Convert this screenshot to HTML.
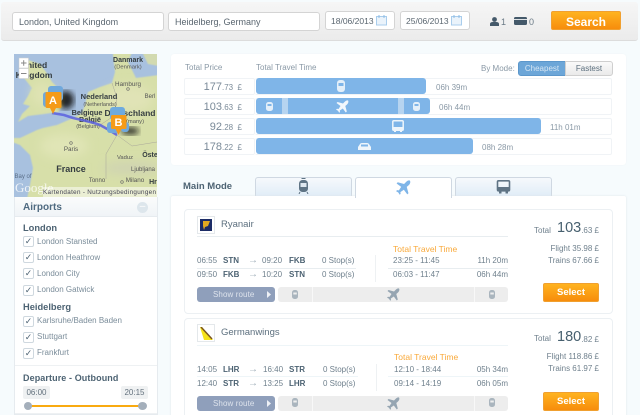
<!DOCTYPE html>
<html><head><meta charset="utf-8">
<style>
html,body{margin:0;padding:0;width:640px;height:415px;overflow:hidden;}
body{background:#f6fbfd;position:relative;font-family:"Liberation Sans",sans-serif;color:#5c6f7e;font-size:9px;}
div,span,svg{position:absolute;box-sizing:border-box;white-space:nowrap;}
.inp{background:#fff;border:1px solid #d4d4d4;border-radius:3px;height:19px;line-height:18px;font-size:9px;color:#5a6670;padding-left:6px;}
.org{background:linear-gradient(#ffb320,#f78d0c);border:1px solid #f0a030;border-radius:2px;color:#fff;font-weight:bold;text-align:center;}
.pb{left:184px;width:71px;background:#fff;border:1px solid #f0f3f6;border-radius:2px;height:17px;}
.rb{left:255px;width:357px;height:17px;background:#fff;border:1px solid #f0f3f6;border-left:0;border-radius:2px;}
.bar{left:256px;height:16px;background:#7fb5e8;border-radius:3px;}
.pr{left:184px;width:58px;text-align:right;color:#7a8a98;font-size:11px;line-height:16px;}
.pr small{font-size:8px;}
.tt{color:#8a99a6;font-size:8px;line-height:12px;}
.cb{left:23px;width:11px;height:11px;background:#fff;border:1px solid #cfd8df;border-radius:2px;color:#4d6373;font-size:9px;line-height:9px;text-align:center;}
.cl{left:37px;font-size:8px;color:#7b8d9a;line-height:12px;}
.h{left:23px;font-weight:bold;font-size:9.3px;color:#4d6373;line-height:12px;}
.card{left:184px;width:429px;background:#fff;border:1px solid #ecf0f3;border-radius:4px;}
.t{font-size:8px;color:#6f808d;line-height:12px;}
.a{font-size:10px;color:#a0aeb9;line-height:12px;left:248px;}
.b{font-size:8px;color:#4d6373;font-weight:bold;line-height:12px;}
.tab{top:177px;height:20px;border:1px solid #cfd8e2;border-bottom:0;border-radius:3px 3px 0 0;background:linear-gradient(#f6f9fc,#dfecf7);}
.sr{left:197px;width:78px;height:15px;background:#8f9fbb;border-radius:3px;color:#dde3ec;font-size:8px;letter-spacing:.1px;line-height:15px;padding-left:16px;}
.sb{left:278px;width:230px;height:15px;background:#ededed;border-radius:3px;}
.r{text-align:right;}
</style></head><body>

<div style="left:1px;top:2px;width:637px;height:39px;background:linear-gradient(#f6f6f6,#ebebeb);border-bottom:1px solid #dcdcdc;border-radius:3px"></div>
<div class="inp" style="left:12px;top:12px;width:152px">London, United Kingdom</div>
<div class="inp" style="left:168px;top:12px;width:152px">Heidelberg, Germany</div>
<div class="inp" style="left:325px;top:11px;width:70px;font-size:8.5px;padding-left:5px">18/06/2013</div>
<svg style="left:376px;top:15px" width="12" height="11"><rect x=".5" y="1.5" width="10" height="8.5" fill="#eaf3fb" stroke="#a9cdec"/><rect x="2.5" y="0" width="1" height="3" fill="#8dbce6"/><rect x="7.5" y="0" width="1" height="3" fill="#8dbce6"/></svg>
<div class="inp" style="left:400px;top:11px;width:70px;font-size:8.5px;padding-left:5px">25/06/2013</div>
<svg style="left:451px;top:15px" width="12" height="11"><rect x=".5" y="1.5" width="10" height="8.5" fill="#eaf3fb" stroke="#a9cdec"/><rect x="2.5" y="0" width="1" height="3" fill="#8dbce6"/><rect x="7.5" y="0" width="1" height="3" fill="#8dbce6"/></svg>
<svg style="left:490px;top:17px" width="9" height="9"><circle cx="4.5" cy="2.5" r="2.4" fill="#44596a"/><path d="M0 9V7q0-2 3-2h3q3 0 3 2v2z" fill="#44596a"/></svg>
<div style="left:501px;top:16px;font-size:9px;color:#6a7a86;line-height:12px">1</div>
<svg style="left:514px;top:17px" width="13" height="9"><rect width="13" height="8" rx="1.5" fill="#44596a"/><rect y="2" width="13" height="1" fill="#dfe3e6"/></svg>
<div style="left:529px;top:16px;font-size:9px;color:#6a7a86;line-height:12px">0</div>
<div class="org" style="left:551px;top:11px;width:70px;height:19px;font-size:12px;line-height:20px">Search</div>

<!-- left column -->
<div style="left:14px;top:197px;width:144px;height:218px;background:#fff;border:1px solid #e6ebef;border-top:0"></div>
<svg style="left:14px;top:54px" width="143" height="143" viewBox="0 0 143 143">
<defs><filter id="bl"><feGaussianBlur stdDeviation="3"/></filter><filter id="s"><feGaussianBlur stdDeviation="0.6"/></filter><filter id="m"><feGaussianBlur stdDeviation="5"/></filter></defs>
<rect width="143" height="143" fill="#a8c1df"/>
<g filter="url(#s)">
<path d="M-2 84L6 84 23 76 29 74 43 71 59 64 68 59 71 51 74 38 86 33 98 29 101 18 99 1 99 -2H118L114 8 118 16 122 24 145 21V145H13L16 131 19 114 16 101 6 91-2 88z" fill="#d7dfa9"/>
<path d="M14 6L26 10 32 18 38 28 46 36 52 44 50 52 44 58 30 60 14 62 4 68 8 60 16 52 9 50 14 42 18 34 10 24z" fill="#d7dfa9"/>
<path d="M128 -2H145V12L134 10z" fill="#d2dab0"/>
</g>
<g filter="url(#m)">
<ellipse cx="118" cy="114" rx="30" ry="6" fill="#cfd3b2"/>
<ellipse cx="50" cy="92" rx="24" ry="12" fill="#e0e5b6"/>
<ellipse cx="115" cy="45" rx="24" ry="14" fill="#e0e3b6"/>
<ellipse cx="28" cy="40" rx="10" ry="12" fill="#dfe3b4"/>
</g>
<path d="M68 60L86 71 103 81M86 71L100 62 103 44 98 29M103 81L118 92 143 88M103 81L92 100 92 125" fill="none" stroke="#a9a79a" stroke-width=".5"/>
<g font-family="Liberation Sans" text-anchor="middle" fill="#343c40">
<text x="23" y="14" font-size="8.500" font-weight="bold">nited</text>
<text x="20" y="24" font-size="8.500" font-weight="bold">Kingdom</text>
<text x="114" y="8" font-size="7" font-weight="bold">Danmark</text>
<text x="114" y="14.500" font-size="5.800" fill="#555">(Denmark)</text>
<text x="114" y="32" font-size="6.300" fill="#555">Hamburg</text>
<text x="136" y="44" font-size="6" fill="#555">Berl</text>
<text x="85" y="45" font-size="7.500" font-weight="bold">Nederland</text>
<text x="86" y="52" font-size="5.500" fill="#555">(Netherlands)</text>
<text x="73" y="61" font-size="7.300" font-weight="bold">Belgique</text>
<text x="76" y="68" font-size="7.300" font-weight="bold">België</text>
<text x="74" y="74" font-size="5.500" fill="#555">(Belgium)</text>
<text x="116" y="62" font-size="8.500" font-weight="bold">Deutschland</text>
<text x="121" y="69" font-size="5.800" fill="#555">(many)</text>
<text x="57" y="97" font-size="6.300" fill="#555">Paris</text>
<text x="57" y="118" font-size="9" font-weight="bold">France</text>
<text x="111" y="105" font-size="5.800" fill="#555">Vaduz</text>
<text x="136" y="103" font-size="7" font-weight="bold">Öste</text>
<text x="129" y="117" font-size="6" fill="#555">Ljubljana</text>
<text x="83" y="128" font-size="6" fill="#555">Tonno</text>
<text x="121" y="128" font-size="6.300" fill="#555">Milano</text>
<text x="139" y="130" font-size="7" font-weight="bold">Hr</text>
<text x="9" y="124" font-size="6" fill="#5b6f88">Bay of</text>
</g>
<circle cx="114" cy="35" r="1.300" fill="none" stroke="#666" stroke-width=".6"/>
<circle cx="57" cy="89" r="1.300" fill="none" stroke="#666" stroke-width=".6"/>
<circle cx="108" cy="128" r="1.300" fill="none" stroke="#666" stroke-width=".6"/>
<path d="M38 59L50 61 59 64 68 66 80 69 86 71 95 76 103 81" fill="none" stroke="#5a60e0" stroke-width="2.600" opacity=".85"/>
<ellipse cx="52" cy="46" rx="8" ry="9" fill="#111" opacity=".85" filter="url(#bl)"/>
<ellipse cx="116" cy="77" rx="9" ry="4" fill="#111" opacity=".75" filter="url(#bl)"/>
<rect x="34" y="32" width="15" height="15" rx="3" fill="#6fa8dc"/>
<rect x="29" y="38" width="15" height="15" rx="3" fill="#6fa8dc"/>
<rect x="96" y="53" width="15" height="13" rx="3" fill="#6eaadf"/>
<rect x="93" y="68" width="14" height="11" rx="3" fill="#6fa8dc"/>
<rect x="107" y="68" width="8" height="10" rx="3" fill="#6fa8dc"/>
<path d="M32 38h14a1.500 1.500 0 0 1 1.500 1.500v13a1.500 1.500 0 0 1-1.500 1.500h-4l-3 6-3-6h-3a1.500 1.500 0 0 1-1.500-1.500v-13a1.500 1.500 0 0 1 1.500-1.500z" fill="#f59b18"/>
<path d="M98 61h13a1.500 1.500 0 0 1 1.500 1.500v11a1.500 1.500 0 0 1-1.500 1.500h-3.500l-3 6-3-6h-3a1.500 1.500 0 0 1-1.500-1.500v-11a1.500 1.500 0 0 1 1.500-1.500z" fill="#f59b18"/>
<text x="39" y="50" font-size="11" font-weight="bold" fill="#fff" text-anchor="middle" font-family="Liberation Sans">A</text>
<text x="104.500" y="72" font-size="11" font-weight="bold" fill="#fff" text-anchor="middle" font-family="Liberation Sans">B</text>
<rect x="29" y="133" width="114" height="10" fill="#fff" opacity=".5"/>
<text x="1" y="138" font-size="13" fill="#fff" opacity=".8" font-family="Liberation Serif">Google</text>
<text x="29" y="140" font-size="6.300" fill="#445" font-family="Liberation Sans" textLength="113">Kartendaten - Nutzungsbedingungen</text>
<rect x="5" y="4" width="9.500" height="10" fill="#fff" stroke="#ccc" stroke-width=".5"/>
<rect x="5" y="14.500" width="9.500" height="10" fill="#fff" stroke="#ccc" stroke-width=".5"/>
<path d="M7 9h5.500M9.700 6.300v5.500M7 19.500h5.500" stroke="#888" fill="none"/>
</svg>
<div style="left:14px;top:197px;width:144px;height:20px;background:linear-gradient(#fbfcfc,#f0f4f7);border:1px solid #e6ebef;border-top:0"></div>
<div style="left:23px;top:202px;font-size:10px;font-weight:bold;color:#4f6a80;line-height:12px">Airports</div>
<div style="left:137px;top:202px;width:11px;height:11px;border-radius:50%;background:#dde6ec;color:#fff;font-size:10px;line-height:10px;text-align:center">–</div>
<div class="h" style="top:222px">London</div>
<div class="cb" style="top:236px">✓</div><div class="cl" style="top:236px">London Stansted</div>
<div class="cb" style="top:252px">✓</div><div class="cl" style="top:252px">London Heathrow</div>
<div class="cb" style="top:268px">✓</div><div class="cl" style="top:268px">London City</div>
<div class="cb" style="top:285px">✓</div><div class="cl" style="top:284px">London Gatwick</div>
<div class="h" style="top:301px">Heidelberg</div>
<div class="cb" style="top:316px">✓</div><div class="cl" style="top:315px">Karlsruhe/Baden Baden</div>
<div class="cb" style="top:332px">✓</div><div class="cl" style="top:331px">Stuttgart</div>
<div class="cb" style="top:348px">✓</div><div class="cl" style="top:347px">Frankfurt</div>
<div style="left:15px;top:365px;width:142px;height:1px;background:#eef1f3"></div>
<div class="h" style="top:372px;font-size:9px;letter-spacing:.1px">Departure - Outbound</div>
<div style="left:23px;top:386px;width:27px;height:13px;background:#eff1f2;border-radius:2px;text-align:center;font-size:8px;line-height:13px;color:#64727e">06:00</div>
<div style="left:121px;top:386px;width:27px;height:13px;background:#eff1f2;border-radius:2px;text-align:center;font-size:8px;line-height:13px;color:#64727e">20:15</div>
<div style="left:30px;top:405px;width:112px;height:2px;background:#f9aa10"></div>
<div style="left:24px;top:402px;width:8px;height:8px;border-radius:50%;background:#a4afbb"></div>
<div style="left:138px;top:402px;width:9px;height:8px;border-radius:50%;background:#a4afbb"></div>
<div style="left:15px;top:413px;width:142px;height:1px;background:#eef1f3"></div>

<!-- summary panel -->
<div style="left:171px;top:54px;width:455px;height:111px;background:#fff;border-radius:3px;box-shadow:0 0 1px #e8edf0"></div>
<div class="tt" style="left:185px;top:62px">Total Price</div>
<div class="tt" style="left:256px;top:62px">Total Travel Time</div>
<div class="tt" style="left:481px;top:63px">By Mode:</div>
<div style="left:518px;top:61px;width:48px;height:15px;background:#6ca6d8;border:1px solid #5c97cb;border-radius:3px 0 0 3px;color:#d7e6f3;font-size:8px;line-height:13px;text-align:center">Cheapest</div>
<div style="left:565px;top:61px;width:48px;height:15px;background:linear-gradient(#fafafa,#eaeaea);border:1px solid #cfcfcf;border-radius:0 3px 3px 0;color:#5c6f7e;font-size:8px;line-height:13px;text-align:center">Fastest</div>

<div class="pb" style="top:78px"></div><div class="rb" style="top:78px"></div>
<div class="pb" style="top:98px"></div><div class="rb" style="top:98px"></div>
<div class="pb" style="top:118px"></div><div class="rb" style="top:118px"></div>
<div class="pb" style="top:138px"></div><div class="rb" style="top:138px"></div>
<div class="pr" style="top:79px">177<small>.73 &nbsp;£</small></div>
<div class="pr" style="top:99px">103<small>.63 &nbsp;£</small></div>
<div class="pr" style="top:119px">92<small>.28 &nbsp;£</small></div>
<div class="pr" style="top:139px">178<small>.22 &nbsp;£</small></div>

<div class="bar" style="top:78px;width:170px"></div>
<div class="bar" style="top:98px;width:174px"></div>
<div style="left:282px;top:98px;width:6px;height:16px;background:#b6d4f0"></div>
<div style="left:398px;top:98px;width:6px;height:16px;background:#b6d4f0"></div>
<div class="bar" style="top:118px;width:285px"></div>
<div class="bar" style="top:138px;width:217px"></div>
<div class="tt" style="left:436px;top:82px">06h 39m</div>
<div class="tt" style="left:439px;top:102px">06h 44m</div>
<div class="tt" style="left:550px;top:122px">11h 01m</div>
<div class="tt" style="left:482px;top:142px">08h 28m</div>

<!-- bar icons -->
<svg style="left:336px;top:80px" width="10" height="13"><rect x="1" y="0" width="8" height="12" rx="3" fill="#e4eff9"/><rect x="2.500" y="3" width="5" height="3" fill="#7fb5e8"/></svg>
<svg style="left:266px;top:102px" width="8" height="10"><rect width="7" height="9" rx="2.500" fill="#e4eff9"/><rect x="1.500" y="2" width="4" height="2" fill="#7fb5e8"/></svg>
<svg style="left:336px;top:100px" width="13" height="13" viewBox="0 0 13 13"><path d="M12 0.500C11 0 9.500 0.800 8.500 2L7 3.500 1.500 2 .5 3 4.500 6 2.500 9 1 8.800 0 9.600 2 10.800 3.200 12.800 4 12 3.800 10.500 6.800 8.500 9.800 12.500 10.800 11.500 9.300 6 11 4.500C12.300 3.300 12.800 1.500 12 0.500z" fill="#f2f7fc"/></svg>
<svg style="left:413px;top:102px" width="8" height="10"><rect width="7" height="9" rx="2.500" fill="#e4eff9"/><rect x="1.500" y="2" width="4" height="2" fill="#7fb5e8"/></svg>
<svg style="left:392px;top:120px" width="12" height="12"><rect x=".8" y=".8" width="10.400" height="9.400" rx="1" fill="none" stroke="#eef5fb" stroke-width="1.500"/><rect x="1" y="7" width="10" height="3.500" fill="#eef5fb"/><rect x="2" y="10" width="2" height="2" fill="#eef5fb"/><rect x="8" y="10" width="2" height="2" fill="#eef5fb"/></svg>
<svg style="left:358px;top:143px" width="13" height="8"><path d="M0 7V4L2 1q.5-1 2-1h5q1.500 0 2 1l2 3v3z" fill="#eef5fb"/><rect x="3" y="1.500" width="7" height="2" fill="#7fb5e8"/></svg>

<!-- tabs -->
<div style="left:183px;font-weight:bold;font-size:9.500px;color:#4d6373;line-height:12px;top:181px">Main Mode</div>
<div class="tab" style="left:255px;width:97px"></div>
<div class="tab" style="left:355px;width:97px;background:#fff;height:21px;z-index:3"></div>
<div class="tab" style="left:455px;width:97px"></div>
<svg style="left:298px;top:178px" width="11" height="16"><rect x="1" y="2" width="9" height="12" rx="3.500" fill="#5f7485"/><rect x="2.500" y="5" width="6" height="4" fill="#dfe8f0"/><path d="M3.500 .5h4" stroke="#5f7485"/><path d="M2 14l-1 2M9 14l1 2" stroke="#5f7485"/></svg>
<svg style="left:396px;top:180px;z-index:4" width="15" height="15" viewBox="0 0 13 13"><path d="M12 0.500C11 0 9.500 0.800 8.500 2L7 3.500 1.500 2 .5 3 4.500 6 2.500 9 1 8.800 0 9.600 2 10.800 3.200 12.800 4 12 3.800 10.500 6.800 8.500 9.800 12.500 10.800 11.500 9.300 6 11 4.500C12.300 3.300 12.800 1.500 12 0.500z" fill="#7fb5e8"/></svg>
<svg style="left:496px;top:180px" width="15" height="14"><rect x="1.500" y=".8" width="12" height="10" rx="1" fill="none" stroke="#5f7485" stroke-width="1.600"/><rect x="1.500" y="7" width="12" height="4.500" fill="#5f7485"/><rect x="3" y="11" width="2.500" height="2.500" fill="#5f7485"/><rect x="9.500" y="11" width="2.500" height="2.500" fill="#5f7485"/></svg>

<!-- results panel -->
<div style="left:171px;top:196px;width:455px;height:225px;background:#fff;box-shadow:0 0 2px #dfe5ea;border-radius:2px;z-index:1"></div>
<div style="left:0;top:0;width:640px;height:415px;z-index:5;overflow:hidden">

<div class="card" style="top:209px;height:105px"></div>
<div style="left:197px;top:216px;width:18px;height:18px;background:#fff;border:1px solid #e4e8eb"></div>
<div style="left:200px;top:219px;width:12px;height:12px;background:#1c2c66"></div>
<svg style="left:200px;top:219px" width="12" height="12"><path d="M3 2h7l-2 5-3 1-1 3-1-4z" fill="#e2aa20"/></svg>
<div style="left:221px;top:219px;font-size:9.500px;color:#5c6f7e;line-height:12px">Ryanair</div>
<div style="left:197px;top:236px;width:311px;height:1px;background:#e8edf0"></div>
<div style="left:393px;top:243px;font-size:8.500px;color:#f9a93a;line-height:12px">Total Travel Time</div>

<div class="t" style="left:197px;top:255px">06:55</div><div class="b" style="left:223px;top:255px">STN</div><div class="a" style="top:255px">→</div><div class="t" style="left:262px;top:255px">09:20</div><div class="b" style="left:289px;top:255px">FKB</div><div class="t" style="left:322px;top:255px">0 Stop(s)</div>
<div style="left:197px;top:268px;width:159px;height:1px;background:#e8edf0"></div>
<div style="left:375px;top:255px;width:1px;height:27px;background:#eef1f3"></div>
<div style="left:388px;top:268px;width:120px;height:1px;background:#e8edf0"></div>
<div class="t" style="left:393px;top:255px">23:25 - 11:45</div><div class="t r" style="left:468px;top:255px;width:40px">11h 20m</div>
<div class="t" style="left:197px;top:269px">09:50</div><div class="b" style="left:223px;top:269px">FKB</div><div class="a" style="top:269px">→</div><div class="t" style="left:262px;top:269px">10:20</div><div class="b" style="left:289px;top:269px">STN</div><div class="t" style="left:322px;top:269px">0 Stop(s)</div>
<div class="t" style="left:393px;top:269px">06:03 - 11:47</div><div class="t r" style="left:468px;top:269px;width:40px">06h 44m</div>

<div class="sr" style="top:287px">Show route</div>
<svg style="left:267px;top:291px" width="5" height="7"><path d="M0 0l4 3.500-4 3.500z" fill="#eef1f6"/></svg>
<div class="sb" style="top:287px"></div>
<div style="left:312px;top:287px;width:1px;height:15px;background:#f8f8f8"></div>
<div style="left:474px;top:287px;width:1px;height:15px;background:#f8f8f8"></div>
<svg style="left:291px;top:290px" width="8" height="10"><rect x="1" y="0" width="6" height="9" rx="2.500" fill="#aab5be"/><rect x="2.300" y="2.500" width="3.500" height="2" fill="#eee"/></svg>
<svg style="left:387px;top:288px" width="13" height="13" viewBox="0 0 13 13"><path d="M12 0.500C11 0 9.500 0.800 8.500 2L7 3.500 1.500 2 .5 3 4.500 6 2.500 9 1 8.800 0 9.600 2 10.800 3.200 12.800 4 12 3.800 10.500 6.800 8.500 9.800 12.500 10.800 11.500 9.300 6 11 4.500C12.300 3.300 12.800 1.500 12 0.500z" fill="#95a5b2"/></svg>
<svg style="left:488px;top:290px" width="8" height="10"><rect x="1" y="0" width="6" height="9" rx="2.500" fill="#aab5be"/><rect x="2.300" y="2.500" width="3.500" height="2" fill="#eee"/></svg>

<div class="t" style="left:534px;top:225px">Total</div>
<div style="left:557px;top:219px;font-size:14.500px;color:#47606f;line-height:18px">103</div>
<div class="t r" style="left:580px;top:225px;width:19px">.63 £</div>
<div class="t r" style="left:530px;top:243px;width:69px">Flight 35.98 £</div>
<div class="t r" style="left:530px;top:255px;width:69px">Trains 67.66 £</div>
<div class="org" style="left:543px;top:283px;width:56px;height:19px;font-size:9.500px;line-height:18px">Select</div>

<div class="card" style="top:318px;height:110px"></div>
<div style="left:197px;top:324px;width:18px;height:18px;background:#fff;border:1px solid #e4e8eb"></div>
<svg style="left:200px;top:327px" width="13" height="13"><path d="M0 0h2l11 13H4z" fill="#f6e31a"/><path d="M1 0l11 12" stroke="#7a5520" stroke-width="1.500"/></svg>
<div style="left:221px;top:327px;font-size:9.500px;color:#5c6f7e;line-height:12px">Germanwings</div>
<div style="left:197px;top:345px;width:311px;height:1px;background:#eef5f8"></div>
<div style="left:394px;top:351px;font-size:8.500px;color:#f9a93a;line-height:12px">Total Travel Time</div>

<div class="t" style="left:197px;top:364px">14:05</div><div class="b" style="left:223px;top:364px">LHR</div><div class="a" style="top:364px">→</div><div class="t" style="left:263px;top:364px">16:40</div><div class="b" style="left:289px;top:364px">STR</div><div class="t" style="left:323px;top:364px">0 Stop(s)</div>
<div style="left:197px;top:376px;width:161px;height:1px;background:#eef5f8"></div>
<div style="left:376px;top:364px;width:1px;height:27px;background:#eef1f3"></div>
<div style="left:388px;top:376px;width:120px;height:1px;background:#eef5f8"></div>
<div class="t" style="left:394px;top:364px">12:10 - 18:44</div><div class="t r" style="left:468px;top:364px;width:40px">05h 34m</div>
<div class="t" style="left:197px;top:378px">12:40</div><div class="b" style="left:223px;top:378px">STR</div><div class="a" style="top:378px">→</div><div class="t" style="left:263px;top:378px">13:25</div><div class="b" style="left:289px;top:378px">LHR</div><div class="t" style="left:323px;top:378px">0 Stop(s)</div>
<div class="t" style="left:394px;top:378px">09:14 - 14:19</div><div class="t r" style="left:468px;top:378px;width:40px">06h 05m</div>

<div class="sr" style="top:396px">Show route</div>
<svg style="left:267px;top:400px" width="5" height="7"><path d="M0 0l4 3.500-4 3.500z" fill="#eef1f6"/></svg>
<div class="sb" style="top:396px"></div>
<div style="left:312px;top:396px;width:1px;height:15px;background:#f8f8f8"></div>
<div style="left:474px;top:396px;width:1px;height:15px;background:#f8f8f8"></div>
<svg style="left:291px;top:398px" width="8" height="10"><rect x="1" y="0" width="6" height="9" rx="2.500" fill="#aab5be"/><rect x="2.300" y="2.500" width="3.500" height="2" fill="#eee"/></svg>
<svg style="left:387px;top:397px" width="13" height="13" viewBox="0 0 13 13"><path d="M12 0.500C11 0 9.500 0.800 8.500 2L7 3.500 1.500 2 .5 3 4.500 6 2.500 9 1 8.800 0 9.600 2 10.800 3.200 12.800 4 12 3.800 10.500 6.800 8.500 9.800 12.500 10.800 11.500 9.300 6 11 4.500C12.300 3.300 12.800 1.500 12 0.500z" fill="#95a5b2"/></svg>
<svg style="left:488px;top:398px" width="8" height="10"><rect x="1" y="0" width="6" height="9" rx="2.500" fill="#aab5be"/><rect x="2.300" y="2.500" width="3.500" height="2" fill="#eee"/></svg>

<div class="t" style="left:534px;top:333px">Total</div>
<div style="left:557px;top:328px;font-size:14.500px;color:#47606f;line-height:18px">180</div>
<div class="t r" style="left:580px;top:334px;width:19px">.82 £</div>
<div class="t r" style="left:530px;top:351px;width:69px">Flight 118.86 £</div>
<div class="t r" style="left:530px;top:363px;width:69px">Trains 61.97 £</div>
<div class="org" style="left:543px;top:392px;width:56px;height:19px;font-size:9.500px;line-height:18px">Select</div>
</div>
</body></html>
